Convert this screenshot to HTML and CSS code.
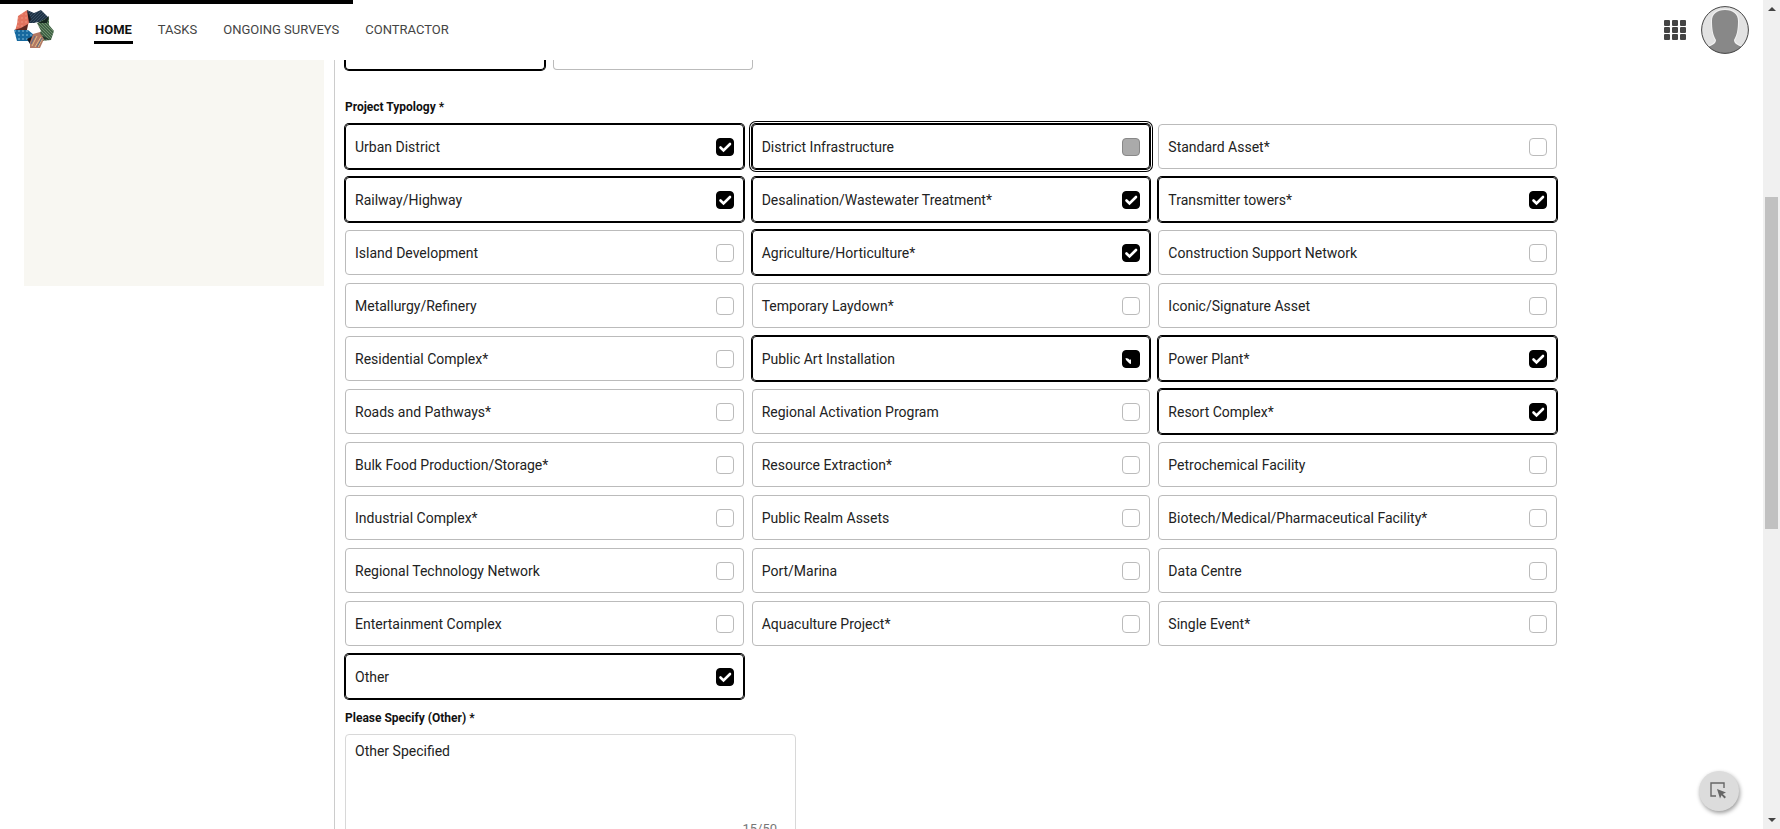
FILE: index.html
```html
<!DOCTYPE html>
<html lang="en">
<head>
<meta charset="utf-8">
<title>Project Survey</title>
<link rel="stylesheet" href="styles.css">
</head>
<body>
<div class="window">
  <div class="page">
    <header class="header">
      <div class="progress"></div>
      <a class="logo" href="#" aria-label="Home">
        <svg width="42" height="42" viewBox="0 0 42 42">
          <defs>
            <pattern id="dots" width="4" height="4" patternUnits="userSpaceOnUse"><rect width="4" height="4" fill="#17699f"/><circle cx="2" cy="2" r=".8" fill="#8fc6df"/></pattern>
            <pattern id="weave" width="3" height="3" patternUnits="userSpaceOnUse"><rect width="3" height="3" fill="#1f3447"/><path d="M0 3L3 0" stroke="#465c70" stroke-width=".7"/></pattern>
            <pattern id="leaf" width="3" height="3" patternUnits="userSpaceOnUse"><rect width="3" height="3" fill="#426447"/><path d="M0 0L3 3" stroke="#7d9b7a" stroke-width=".8"/></pattern>
            <pattern id="coral" width="4" height="4" patternUnits="userSpaceOnUse"><rect width="4" height="4" fill="#e2735f"/><circle cx="1" cy="1" r=".7" fill="#f3a18e"/></pattern>
          </defs>
          <path d="M14 1L21 4L28 1L36 9L36 14L25 13L21 14L15 14Z" fill="url(#weave)"/>
          <path d="M36 8L36 16L41 22L38 31L29 32L25 26L28 22L24 14Z" fill="url(#leaf)"/>
          <path d="M25 14L31 11L36 7L34 14Z" fill="#15251f"/>
          <path d="M5 7L14 1L17 11L15 16L13 22L2 22L4 15Z" fill="url(#coral)"/>
          <path d="M14 1L18 10L16 14Z" fill="#19171d"/>
          <path d="M1 21L15 21L21 26L19 34L15 32L4 32Z" fill="url(#dots)"/>
          <path d="M1 21L14 21L15 15L8 19Z" fill="#5c2721"/>
          <path d="M14 30L20 27L18 38L17 35Z" fill="#11151d"/>
          <path d="M27 23L31 30L27 39L17 39L17 33L20 25Z" fill="#b27863"/>
          <path d="M19 37L24 27M22 38L28 28M25 38L29 30" stroke="#e1bd87" fill="none"/>
          <path d="M18 35L22 27M24 38L29 29" stroke="#596a86" fill="none"/>
          <path d="M27 23L31 30L38 31L28 26Z" fill="#25352b"/>
        </svg>
      </a>
      <nav class="nav">
        <a class="nav-link active" href="#">HOME</a>
        <a class="nav-link" href="#">TASKS</a>
        <a class="nav-link" href="#">ONGOING SURVEYS</a>
        <a class="nav-link" href="#">CONTRACTOR</a>
      </nav>
      <div class="tools">
        <button class="apps" type="button" aria-label="Apps">
          <svg width="22" height="20" viewBox="0 0 22 20" fill="#444"><rect width="6" height="6" rx="1"/><rect x="8" width="6" height="6" rx="1"/><rect x="16" width="6" height="6" rx="1"/><rect y="7" width="6" height="6" rx="1"/><rect x="8" y="7" width="6" height="6" rx="1"/><rect x="16" y="7" width="6" height="6" rx="1"/><rect y="14" width="6" height="6" rx="1"/><rect x="8" y="14" width="6" height="6" rx="1"/><rect x="16" y="14" width="6" height="6" rx="1"/></svg>
        </button>
        <button class="avatar" type="button" aria-label="Profile">
          <svg width="48" height="48" viewBox="0 0 48 48">
            <defs><clipPath id="round"><circle cx="24" cy="24" r="23.5"/></clipPath></defs>
            <circle cx="24" cy="24" r="23.5" fill="#e2e2e2"/>
            <g clip-path="url(#round)"><path d="M24 4C16 4 11 8 11 15C11 23 12 29 15 34C15 38 11 39 7 41L7 48L41 48L41 41C37 39 33 38 33 34C36 29 37 23 37 15C37 8 32 4 24 4Z" fill="#888" stroke="#f2f2f2" stroke-width="2" paint-order="stroke"/></g>
            <circle cx="24" cy="24" r="23.4" fill="none" stroke="#444" stroke-width="1"/>
          </svg>
        </button>
      </div>
    </header>
    <div class="body">
      <aside class="side"><div class="side-panel"></div></aside>
      <main class="main">
        <div class="cut-row"><div class="cut chosen"></div><div class="cut"></div></div>
        <fieldset class="group">
          <legend class="label">Project Typology *</legend>
          <div class="grid">
            <label class="card on"><span>Urban District</span><input type="checkbox" checked></label>
            <label class="card on focus"><span>District Infrastructure</span><input class="pressed" type="checkbox"></label>
            <label class="card"><span>Standard Asset*</span><input type="checkbox"></label>
            <label class="card on"><span>Railway/Highway</span><input type="checkbox" checked></label>
            <label class="card on"><span>Desalination/Wastewater Treatment*</span><input type="checkbox" checked></label>
            <label class="card on"><span>Transmitter towers*</span><input type="checkbox" checked></label>
            <label class="card"><span>Island Development</span><input type="checkbox"></label>
            <label class="card on"><span>Agriculture/Horticulture*</span><input type="checkbox" checked></label>
            <label class="card"><span>Construction Support Network</span><input type="checkbox"></label>
            <label class="card"><span>Metallurgy/Refinery</span><input type="checkbox"></label>
            <label class="card"><span>Temporary Laydown*</span><input type="checkbox"></label>
            <label class="card"><span>Iconic/Signature Asset</span><input type="checkbox"></label>
            <label class="card"><span>Residential Complex*</span><input type="checkbox"></label>
            <label class="card on"><span>Public Art Installation</span><input class="drawing" type="checkbox" checked></label>
            <label class="card on"><span>Power Plant*</span><input type="checkbox" checked></label>
            <label class="card"><span>Roads and Pathways*</span><input type="checkbox"></label>
            <label class="card"><span>Regional Activation Program</span><input type="checkbox"></label>
            <label class="card on"><span>Resort Complex*</span><input type="checkbox" checked></label>
            <label class="card"><span>Bulk Food Production/Storage*</span><input type="checkbox"></label>
            <label class="card"><span>Resource Extraction*</span><input type="checkbox"></label>
            <label class="card"><span>Petrochemical Facility</span><input type="checkbox"></label>
            <label class="card"><span>Industrial Complex*</span><input type="checkbox"></label>
            <label class="card"><span>Public Realm Assets</span><input type="checkbox"></label>
            <label class="card"><span>Biotech/Medical/Pharmaceutical Facility*</span><input type="checkbox"></label>
            <label class="card"><span>Regional Technology Network</span><input type="checkbox"></label>
            <label class="card"><span>Port/Marina</span><input type="checkbox"></label>
            <label class="card"><span>Data Centre</span><input type="checkbox"></label>
            <label class="card"><span>Entertainment Complex</span><input type="checkbox"></label>
            <label class="card"><span>Aquaculture Project*</span><input type="checkbox"></label>
            <label class="card"><span>Single Event*</span><input type="checkbox"></label>
            <label class="card on"><span>Other</span><input type="checkbox" checked></label>
          </div>
        </fieldset>
        <label class="label other-label" for="other">Please Specify (Other) *</label>
        <div class="note">
          <textarea class="note-text" id="other" rows="3">Other Specified</textarea>
          <span class="count">15/50</span>
        </div>
      </main>
    </div>
    <button class="fab" type="button" aria-label="Select element">
      <svg width="18" height="18" viewBox="0 0 18 18"><path d="M14 6V1H1V14H6" fill="none" stroke="#666" stroke-width="1.4"/><path d="M7 7L16 10.5L12.8 12L16 15L14.5 16.5L11.5 13.3L10 16.5Z" fill="#666"/></svg>
    </button>
  </div>
  <div class="scrollbar" aria-hidden="true">
    <span class="arrow up"></span>
    <span class="thumb"></span>
    <span class="arrow down"></span>
  </div>
</div>
</body>
</html>
```
FILE: styles.css
```css
* { box-sizing: border-box; }
body { margin: 0; color: #222; background: #fff; font: 14px/20px "Roboto", sans-serif; }
button { padding: 0; border: 0; background: none; cursor: pointer; }
svg { display: block; }
.window { display: flex; height: 100vh; overflow: hidden; }
.page { position: relative; flex: 1; min-width: 0; display: flex; flex-direction: column; }

.header { position: relative; flex: none; height: 60px; padding: 0 14px 0 13px; display: flex; align-items: center; }
.progress { position: absolute; left: 0; top: 0; width: 20%; height: 4px; background: #000; }
.logo { flex: none; }
.nav { display: flex; gap: 24px; padding-left: 39px; font-size: 13px; }
.nav-link { padding: 4px 1px 1px; color: #444; text-decoration: none; border-bottom: 3px solid transparent; }
.nav-link.active { color: #111; font-weight: bold; border-color: #000; }
.tools { margin-left: auto; display: flex; align-items: center; gap: 15px; }

.body { flex: 1; min-height: 0; display: flex; overflow: hidden; }
.side { flex: none; width: 335px; padding: 0 10px 0 24px; border-right: 1px solid #ccc; }
.side-panel { height: 226px; background: #f8f7f2; }
.main { flex: 1; max-width: 1222px; padding-left: 10px; }
.cut-row { display: flex; gap: 8px; }
.cut { width: 200px; height: 10px; border: 1px solid #bbb; border-top: 0; border-radius: 0 0 4px 4px; }
.cut.chosen { border-color: #000; box-shadow: 0 0 0 1px #000; }
.group { margin: 27px 0 0; padding: 0; border: 0; min-width: 0; }
.label { display: block; padding: 0 0 7px; color: #111; font-size: 12px; line-height: 20px; font-weight: bold; }
.grid { display: grid; grid-template-columns: repeat(3, 1fr); gap: 8px; }
.card { display: flex; align-items: center; justify-content: space-between; height: 45px; padding: 0 9px; border: 1px solid #bbb; border-radius: 4px; }
.card.on { border-color: #000; box-shadow: 0 0 0 1px #000; }
.card.focus { box-shadow: 0 0 0 1px #000, 0 0 0 2px #fff, 0 0 0 3px #000; }
.card input { appearance: none; flex: none; width: 18px; height: 18px; margin: 0; border: 1px solid #bbb; border-radius: 4px; background: #fff; }
.card input:checked { border-color: #000; background: #000 url("data:image/svg+xml,%3Csvg xmlns='http://www.w3.org/2000/svg' viewBox='0 0 16 16'%3E%3Cpath d='M3.5 8.5L6.5 11.5L13 5' fill='none' stroke='white' stroke-width='2.6' stroke-linecap='round'/%3E%3C/svg%3E") center / 16px no-repeat; }
.card input.drawing { background-image: url("data:image/svg+xml,%3Csvg xmlns='http://www.w3.org/2000/svg' viewBox='0 0 16 16'%3E%3Cpath d='M2.5 7L5 7.5L7 9L8 8V13L6.5 12.5L3 9Z' fill='white'/%3E%3C/svg%3E"); }
.card input.pressed { border-color: #888; background: #aaa; }
.other-label { padding: 9px 0 6px; }
.note { width: 451px; max-width: 100%; padding: 6px 9px; display: flex; flex-direction: column; border: 1px solid #d8d8d8; border-radius: 4px; }
.note-text { height: 78px; padding: 0; border: 0; outline: 0; resize: none; font: inherit; color: inherit; background: none; }
.count { align-self: flex-end; padding-right: 9px; color: #777; font-size: 13px; }

.fab { position: absolute; right: 24px; bottom: 18px; width: 40px; height: 40px; display: grid; place-items: center; border-radius: 50%; background: #dcdcdc; box-shadow: 1px 2px 4px rgba(0, 0, 0, .4); }

.scrollbar { flex: none; width: 17px; padding: 7px 2px; display: flex; flex-direction: column; align-items: center; background: #f0f0f0; }
.thumb { width: 13px; height: 40vh; margin: 186px 0 auto; background: #c1c1c1; }
.arrow { border: 4px solid transparent; }
.up { border-top: 0; border-bottom-color: #444; }
.down { border-bottom: 0; border-top-color: #444; }
```
